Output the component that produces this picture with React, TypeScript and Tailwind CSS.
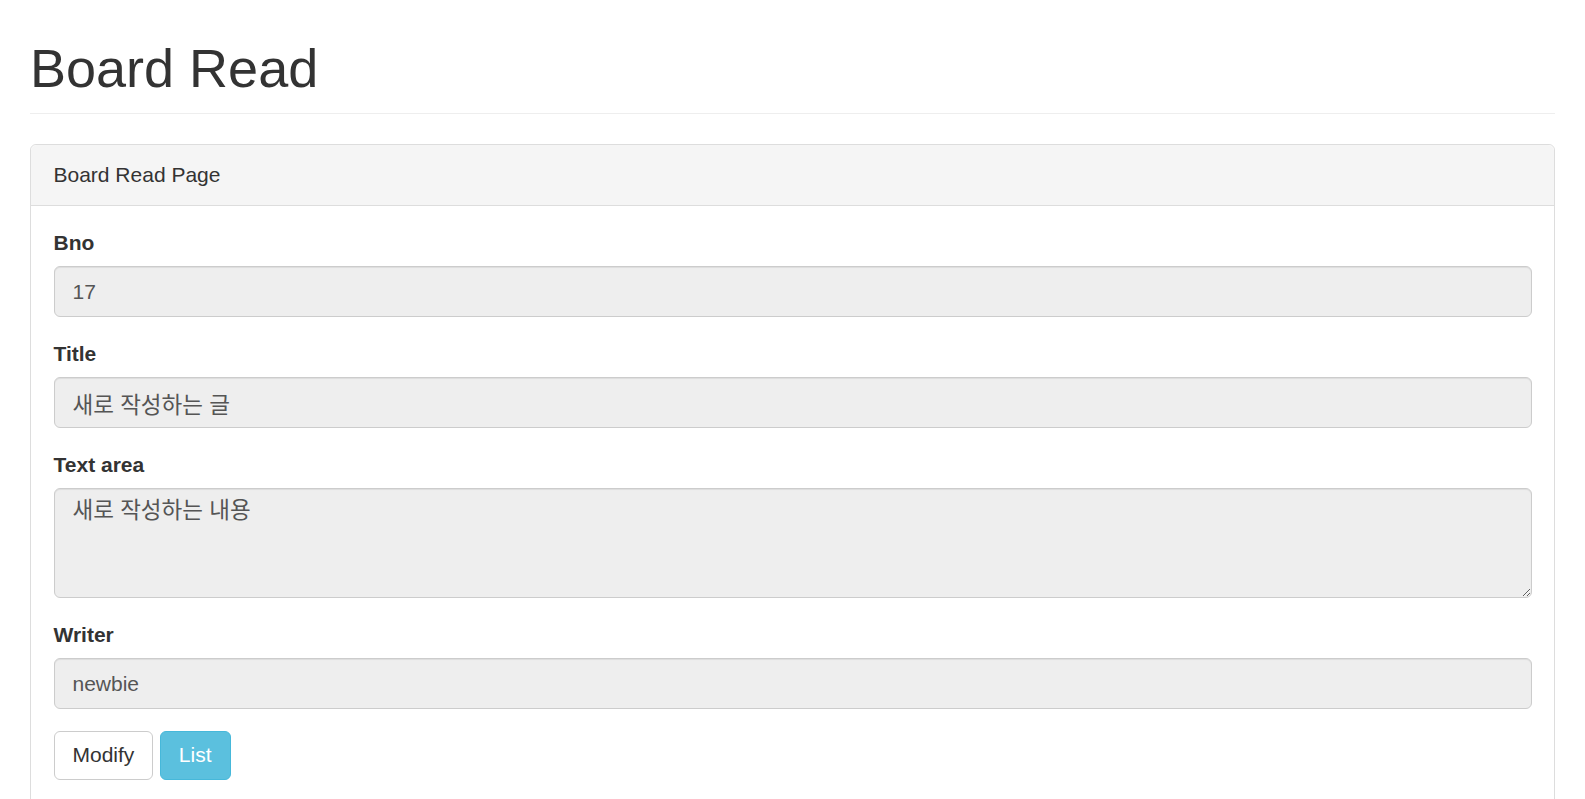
const FONT = "font-['Liberation_Sans','Noto_Sans_CJK_KR',sans-serif]";

type FieldProps = {
  label: string;
  value: string;
  multiline?: boolean;
  korean?: boolean;
};

const Field = ({ label, value, multiline, korean }: FieldProps) => {
  const size = korean ? "text-[22.5px] pt-[7px]" : "text-[21px] pt-[9px]";
  return (
    <div className="mb-[21.5px]">
      <label className="block mb-[8.5px] text-[21px] leading-[30px] font-bold text-[#333]">
        {label}
      </label>
      {multiline ? (
        <textarea
          readOnly
          value={value}
          className={`block w-full h-[110px] px-[18px] pb-[9px] ${size} leading-[30px] text-[#555] bg-[#eee] border border-[#ccc] rounded-[6px] shadow-[inset_0_1px_1px_rgba(0,0,0,0.075)] outline-none resize-y`}
        />
      ) : (
        <input
          readOnly
          value={value}
          className={`block w-full h-[51px] px-[18px] py-[9px] ${korean ? "text-[22.5px]" : "text-[21px]"} leading-[30px] text-[#555] bg-[#eee] border border-[#ccc] rounded-[6px] shadow-[inset_0_1px_1px_rgba(0,0,0,0.075)] outline-none`}
        />
      )}
    </div>
  );
};

const App = () => {
  return (
    <div className={`${FONT} min-h-screen bg-white text-[#333] px-[30px]`}>
      <div className="pt-[39px] pb-[15px] border-b border-[#eee]">
        <h1 className="text-[54px] leading-[59px] font-normal text-[#333]">Board Read</h1>
      </div>

      <div className="mt-[30px] border border-[#ddd] rounded-[6px] bg-white">
        <div className="px-[22.5px] py-[15px] bg-[#f5f5f5] border-b border-[#ddd] rounded-t-[6px] text-[21px] leading-[30px] text-[#333]">
          Board Read Page
        </div>
        <div className="px-[22.5px] pt-[21.5px] pb-[40px]">
          <Field label="Bno" value="17" />
          <Field label="Title" value="새로 작성하는 글" korean />
          <Field label="Text area" value="새로 작성하는 내용" multiline korean />
          <Field label="Writer" value="newbie" />
          <div className="flex gap-[6.5px]">
            <button className="h-[49.5px] px-[18px] text-[21px] leading-[30px] text-[#333] bg-white border border-[#ccc] rounded-[6px]">
              Modify
            </button>
            <button className="h-[49.5px] px-[18px] text-[21px] leading-[30px] text-white bg-[#5bc0de] border border-[#46b8da] rounded-[6px]">
              List
            </button>
          </div>
        </div>
      </div>
    </div>
  );
};

export default App;
